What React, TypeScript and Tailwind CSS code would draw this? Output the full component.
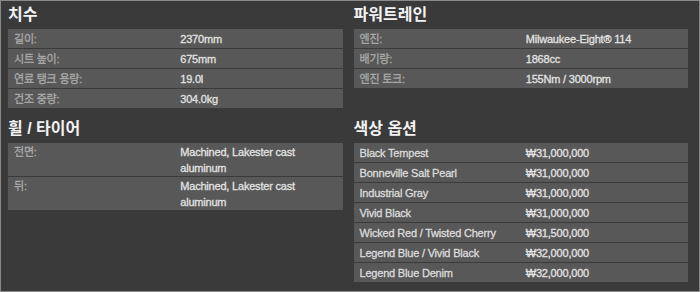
import React from 'react';

interface SpecRow {
  label: string;
  value: string;
}

interface SpecSection {
  title: string;
  rows: SpecRow[];
}

const dimensions: SpecSection = {
  title: '치수',
  rows: [
    { label: '길이:', value: '2370mm' },
    { label: '시트 높이:', value: '675mm' },
    { label: '연료 탱크 용량:', value: '19.0l' },
    { label: '건조 중량:', value: '304.0kg' },
  ],
};

const wheels: SpecSection = {
  title: '휠 / 타이어',
  rows: [
    { label: '전면:', value: 'Machined, Lakester cast aluminum' },
    { label: '뒤:', value: 'Machined, Lakester cast aluminum' },
  ],
};

const powertrain: SpecSection = {
  title: '파워트레인',
  rows: [
    { label: '엔진:', value: 'Milwaukee-Eight® 114' },
    { label: '배기량:', value: '1868cc' },
    { label: '엔진 토크:', value: '155Nm / 3000rpm' },
  ],
};

const colors: SpecSection = {
  title: '색상 옵션',
  rows: [
    { label: 'Black Tempest', value: '₩31,000,000' },
    { label: 'Bonneville Salt Pearl', value: '₩31,000,000' },
    { label: 'Industrial Gray', value: '₩31,000,000' },
    { label: 'Vivid Black', value: '₩31,000,000' },
    { label: 'Wicked Red / Twisted Cherry', value: '₩31,500,000' },
    { label: 'Legend Blue / Vivid Black', value: '₩32,000,000' },
    { label: 'Legend Blue Denim', value: '₩32,000,000' },
  ],
};

// bright = label column in light text (colour list), tight = two-line rows
const Section: React.FC<{ section: SpecSection; bright?: boolean; tight?: boolean }> = ({ section, bright, tight }) => (
  <div className="pr-[11px]">
    <h2 className="h-[28px] pt-[4px] text-[16px] font-bold leading-[20px] text-[#f2f2f2]">{section.title}</h2>
    <div className="flex flex-col gap-px">
      {section.rows.map((row) => (
        <div
          key={row.label}
          className={`grid grid-cols-2 bg-[#585858] text-[11px] leading-[16px] tracking-[-0.2px] [-webkit-text-stroke:0.3px_currentColor] ${tight ? 'pt-[1px]' : 'pt-[2px] pb-[1px]'}`}
        >
          <div className={`px-[6px] ${bright ? 'text-[#dcdcdc]' : 'text-[#a9a9a9]'}`}>{row.label}</div>
          <div className="px-[5px] text-[#e2e2e2]">{row.value}</div>
        </div>
      ))}
    </div>
  </div>
);

export default function App() {
  return (
    <div
      className="h-[292px] w-[700px] border border-[#8a8a8a] bg-[#3a3a3a] pl-[7px]"
      style={{ fontFamily: '"Liberation Sans", Arial, "Noto Sans CJK KR", sans-serif' }}
    >
      <div className="grid grid-cols-2 gap-y-[7px]">
        <Section section={dimensions} />
        <Section section={powertrain} />
        <Section section={wheels} tight />
        <Section section={colors} bright />
      </div>
    </div>
  );
}
